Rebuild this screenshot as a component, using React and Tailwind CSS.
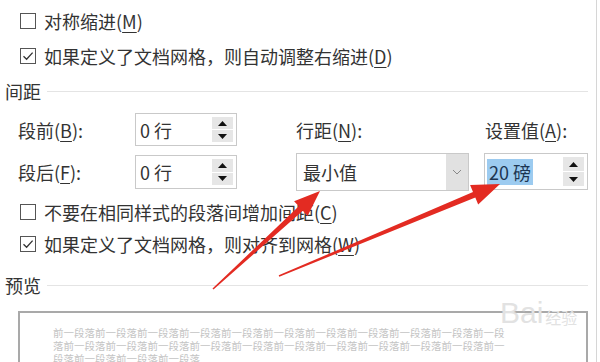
import React from "react";

function CheckBox({ checked }) {
  return (
    <div className="w-[16px] h-[16px] border border-[#555] bg-white flex items-center justify-center shrink-0">
      {checked && (
        <svg width="12" height="10" viewBox="0 0 12 10">
          <path d="M1.5 5.2 L4.6 8.2 L10.6 1.6" fill="none" stroke="#333" strokeWidth="1.3" />
        </svg>
      )}
    </div>
  );
}

function U({ children }) {
  return <span className="underline underline-offset-[3px] decoration-[1px]">{children}</span>;
}

function CheckRow({ checked, children, h }) {
  return (
    <div className={`flex items-center pl-[20px] gap-[8px] ${h}`}>
      <CheckBox checked={checked} />
      <span className="leading-none whitespace-nowrap">{children}</span>
    </div>
  );
}

function Tri({ up }) {
  return (
    <svg width="9" height="5" viewBox="0 0 9 5">
      {up ? <polygon points="0,5 9,5 4.5,0" fill="#111" /> : <polygon points="0,0 9,0 4.5,5" fill="#111" />}
    </svg>
  );
}

function SpinBtns() {
  return (
    <div className="w-[21px] flex flex-col py-[3px] mr-[3px] gap-[1px] shrink-0">
      <div className="flex-1 bg-[#e6e6e6] flex items-center justify-center">
        <Tri up />
      </div>
      <div className="flex-1 bg-[#e6e6e6] flex items-center justify-center">
        <Tri />
      </div>
    </div>
  );
}

function SectionTitle({ children, h }) {
  return (
    <div className={`flex items-center pl-[5px] pr-[8px] gap-[6px] ${h}`}>
      <span className="leading-none">{children}</span>
      <div className="flex-1 h-[1px] bg-[#e4e4e4]" />
    </div>
  );
}

function arrowPts(x1, y1, x2, y2, tailW, shaftW, headL, headW) {
  const dx = x2 - x1, dy = y2 - y1;
  const L = Math.hypot(dx, dy);
  const ux = dx / L, uy = dy / L;
  const nx = -uy, ny = ux;
  const bx = x2 - ux * headL, by = y2 - uy * headL;
  const p = [
    [x1 + (nx * tailW) / 2, y1 + (ny * tailW) / 2],
    [bx + (nx * shaftW) / 2, by + (ny * shaftW) / 2],
    [bx + (nx * headW) / 2, by + (ny * headW) / 2],
    [x2, y2],
    [bx - (nx * headW) / 2, by - (ny * headW) / 2],
    [bx - (nx * shaftW) / 2, by - (ny * shaftW) / 2],
    [x1 - (nx * tailW) / 2, y1 - (ny * tailW) / 2],
  ];
  return p.map((q) => q.join(",")).join(" ");
}

const line1 = "前一段落前一段落前一段落前一段落前一段落前一段落前一段落前一段落前一段落前一段落前一段";
const line2 = "落前一段落前一段落前一段落前一段落前一段落前一段落前一段落前一段落前一段落前一段落前一";
const line3 = "段落前一段落前一段落前一段落";

export default function App() {
  return (
    <div className="relative w-[600px] h-[362px] overflow-hidden bg-white text-[#333] text-[18px] font-['Noto_Sans_CJK_SC','Microsoft_YaHei',sans-serif]">
      <div className="w-[597px] h-full border-r border-[#d6d6d6] pt-[6px]">
        <CheckRow h="h-[30px]">
          对称缩进(<U>M</U>)
        </CheckRow>
        <CheckRow checked h="h-[40px]">
          如果定义了文档网格，则自动调整右缩进(<U>D</U>)
        </CheckRow>
        <SectionTitle h="h-[30px]">间距</SectionTitle>

        <div className="flex items-start pl-[18px]">
          <div className="w-[219px] flex flex-col">
            <div className="flex items-center h-[33px] mt-[7px]">
              <span className="w-[117px] leading-none whitespace-nowrap">
                段前(<U>B</U>):
              </span>
              <div className="w-[102px] h-full flex border border-[#c9c9c9]">
                <div className="flex-1 flex items-center pl-[4px] leading-none">0 行</div>
                <SpinBtns />
              </div>
            </div>
            <div className="flex items-center h-[34px] mt-[9px]">
              <span className="w-[117px] leading-none whitespace-nowrap">
                段后(<U>F</U>):
              </span>
              <div className="w-[102px] h-full flex border border-[#c9c9c9]">
                <div className="flex-1 flex items-center pl-[4px] leading-none">0 行</div>
                <SpinBtns />
              </div>
            </div>
          </div>

          <div className="w-[173px] ml-[59px] flex flex-col">
            <div className="h-[33px] mt-[7px] flex items-center leading-none whitespace-nowrap">
              行距(<U>N</U>):
            </div>
            <div className="h-[38px] mt-[7px] flex border border-[#c9c9c9]">
              <div className="flex-1 flex items-center pl-[6px] leading-none">最小值</div>
              <div className="w-[22px] bg-[#e1e1e1] flex items-center justify-center">
                <svg width="10" height="6" viewBox="0 0 10 6">
                  <path d="M1 1 L5 5 L9 1" fill="none" stroke="#888" strokeWidth="1" />
                </svg>
              </div>
            </div>
          </div>

          <div className="w-[104px] ml-[15px] flex flex-col">
            <div className="h-[33px] mt-[7px] flex items-center leading-none whitespace-nowrap pl-[1px]">
              设置值(<U>A</U>):
            </div>
            <div className="h-[37px] mt-[7px] flex border border-[#c9c9c9]">
              <div className="flex-1 flex items-center pl-[2px]">
                <span className="bg-[#9ccbf0] text-[#1c3552] leading-none h-[26px] flex items-center px-[2px]">20 磅</span>
              </div>
              <SpinBtns />
            </div>
          </div>
        </div>

        <div className="mt-[5px]">
          <CheckRow h="h-[32px]">
            不要在相同样式的段落间增加间距(<U>C</U>)
          </CheckRow>
          <CheckRow checked h="h-[32px]">
            如果定义了文档网格，则对齐到网格(<U>W</U>)
          </CheckRow>
        </div>

        <div className="mt-[10px]">
          <SectionTitle h="h-[30px]">预览</SectionTitle>
        </div>

        <div className="ml-[18px] mr-[8px] mt-[11px] h-[80px] border-2 border-[#a9a9a9] pt-[13px] pl-[33px] pr-[50px] text-[10.5px] leading-[13px] text-[#c4c4c4] overflow-hidden">
          <div className="whitespace-nowrap overflow-hidden">{line1}</div>
          <div className="whitespace-nowrap overflow-hidden">{line2}</div>
          <div className="whitespace-nowrap overflow-hidden">{line3}</div>
        </div>
      </div>

      <div className="absolute left-[500px] top-[298px] flex items-end gap-[2px] text-[#e2e2e2] pointer-events-none">
        <span className="text-[30px] leading-none font-['Liberation_Sans',sans-serif]">Bai</span>
        <span className="text-[16px] leading-none mb-[3px]">经验</span>
      </div>

      <svg className="absolute left-0 top-0 pointer-events-none" width="600" height="362" viewBox="0 0 600 362">
        <polygon points={arrowPts(213, 289, 320, 191, 1.5, 6, 26, 20)} fill="#e32b22" />
        <polygon points={arrowPts(279, 276, 500, 184, 1.5, 6, 28, 21)} fill="#e32b22" />
      </svg>
    </div>
  );
}
